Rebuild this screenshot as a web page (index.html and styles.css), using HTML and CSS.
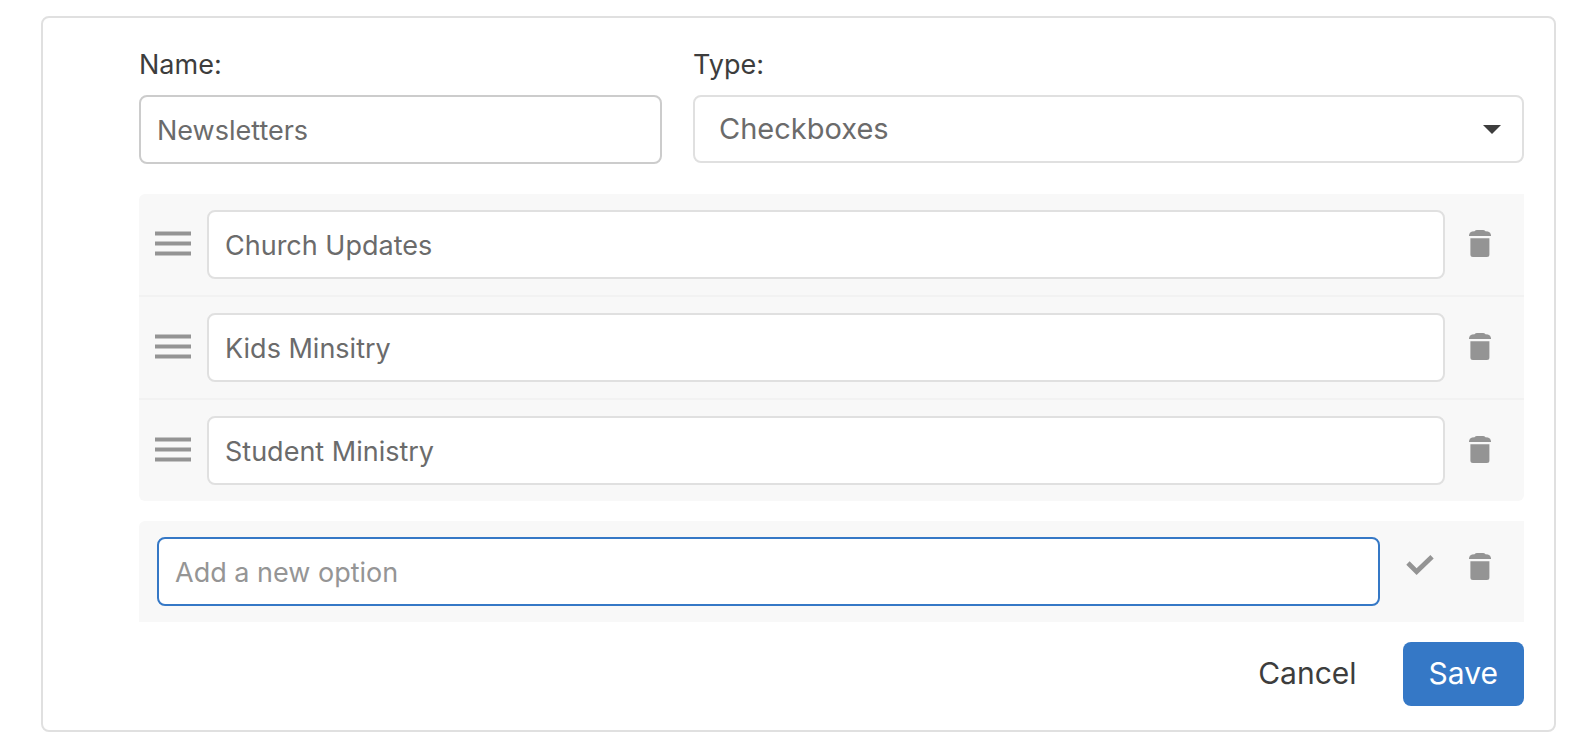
FILE: index.html
```html
<!DOCTYPE html>
<html lang="en">
<head>
<meta charset="utf-8">
<meta name="viewport" content="width=device-width, initial-scale=1">
<title>Edit field</title>
<link rel="stylesheet" href="styles.css">
</head>
<body>
<svg class="sprite" aria-hidden="true">
  <symbol id="grip" viewBox="0 0 36 25"><path d="M0 .5h36v4H0zM0 10.500h36v4H0zM0 20.500h36v4H0z"/></symbol>
  <symbol id="trash" viewBox="0 0 22 27"><path d="M0 6V5Q.3 2.300 3 1.500L5.500 1.200Q6.500 0 8 0h6q1.500 0 2.500 1.200L19 1.500q2.700.8 3 3.500V6zM1.400 8.300h19v16.200q0 2.500-2.500 2.500h-14q-2.500 0-2.500-2.500z"/></symbol>
  <symbol id="check" viewBox="0 0 28 20"><path d="M.3 9.700 3.600 6.300l7 7L24.400 0l3.300 3.400L10.600 20z"/></symbol>
</svg>
<form class="card">
  <div class="fields">
    <div class="field field-name">
      <label class="label" for="name">Name:</label>
      <input class="input input-strong" id="name" type="text" value="Newsletters">
    </div>
    <div class="field">
      <label class="label" for="type">Type:</label>
      <div class="select-wrap">
        <select class="select" id="type"><option>Checkboxes</option></select>
        <svg class="caret" viewBox="0 0 18 9" aria-hidden="true"><path d="M0 0h18L9 9z"/></svg>
      </div>
    </div>
  </div>
  <ul class="options">
    <li class="option">
      <button class="icon-button grip" type="button" aria-label="Reorder"><svg class="icon-grip"><use href="#grip"/></svg></button>
      <input class="input" type="text" aria-label="Option 1" value="Church Updates">
      <button class="icon-button remove" type="button" aria-label="Delete"><svg class="icon-trash"><use href="#trash"/></svg></button>
    </li>
    <li class="option">
      <button class="icon-button grip" type="button" aria-label="Reorder"><svg class="icon-grip"><use href="#grip"/></svg></button>
      <input class="input" type="text" aria-label="Option 2" value="Kids Minsitry">
      <button class="icon-button remove" type="button" aria-label="Delete"><svg class="icon-trash"><use href="#trash"/></svg></button>
    </li>
    <li class="option">
      <button class="icon-button grip" type="button" aria-label="Reorder"><svg class="icon-grip"><use href="#grip"/></svg></button>
      <input class="input" type="text" aria-label="Option 3" value="Student Ministry">
      <button class="icon-button remove" type="button" aria-label="Delete"><svg class="icon-trash"><use href="#trash"/></svg></button>
    </li>
  </ul>
  <div class="new-option">
    <input class="input input-active" type="text" aria-label="New option" placeholder="Add a new option">
    <button class="icon-button confirm" type="button" aria-label="Add"><svg class="icon-check"><use href="#check"/></svg></button>
    <button class="icon-button remove" type="button" aria-label="Delete"><svg class="icon-trash"><use href="#trash"/></svg></button>
  </div>
  <div class="actions">
    <button class="button" type="button">Cancel</button>
    <button class="button button-primary" type="submit">Save</button>
  </div>
</form>
</body>
</html>
```
FILE: styles.css
```css
* {
  box-sizing: border-box;
}

body {
  margin: 0;
  padding: 16px 40px 16px 41px;
  background: #fff;
  color: #3d3d3d;
  font-family: Inter, "Liberation Sans", sans-serif;
  font-size: 27px;
}

input,
select,
button {
  margin: 0;
  font: inherit;
}

.sprite {
  display: none;
}

.card {
  padding: 29px 30px 24px 96px;
  border: 2px solid #e0e0e0;
  border-radius: 8px;
}

.fields {
  display: grid;
  grid-template-columns: 2fr 3fr;
  margin-bottom: 30px;
}

.field-name {
  padding-right: 31px;
}

.label {
  display: block;
  margin-bottom: 12px;
  line-height: 36px;
}

.input {
  display: block;
  flex: 1;
  width: 100%;
  min-width: 0;
  height: 69px;
  padding: 2px 16px 0;
  border: 2px solid #e0e0e0;
  border-radius: 8px;
  outline: 0;
  background: #fff;
  color: #6b6b6b;
}

.input::placeholder {
  color: #959595;
  opacity: 1;
}

.input-strong {
  border-color: #cccccc;
}

.input-active {
  border-color: #3578c6;
}

.select-wrap {
  position: relative;
}

.select {
  display: block;
  width: 100%;
  height: 68px;
  padding: 0 56px 2px 24px;
  border: 2px solid #e0e0e0;
  border-radius: 8px;
  appearance: none;
  background: #fff;
  color: #6b6b6b;
  font-size: 29px;
}

.caret {
  position: absolute;
  top: 30px;
  right: 23px;
  width: 18px;
  height: 9px;
  fill: #3d3d3d;
  pointer-events: none;
}

.options {
  margin: 0 0 20px;
  padding: 0;
  border-radius: 6px 0 6px 6px;
  background: #f8f8f8;
  list-style: none;
}

.option {
  display: flex;
  align-items: center;
  padding: 16px 0;
}

.option + .option {
  border-top: 2px solid #f2f2f2;
}

.new-option {
  display: flex;
  align-items: flex-start;
  padding: 16px 0 16px 18px;
  border-radius: 6px 0 0 0;
  background: #f8f8f8;
}

.icon-button {
  flex: none;
  padding: 16px 0 18px;
  border: 0;
  background: none;
}

.icon-button svg {
  display: block;
  fill: #949494;
}

.grip {
  padding-right: 16px;
  padding-left: 16px;
}

.remove {
  padding-right: 33px;
  padding-left: 24px;
}

.confirm {
  padding: 18px 11px 18px 26px;
}

.icon-grip {
  width: 36px;
  height: 25px;
}

.icon-trash {
  width: 22px;
  height: 27px;
}

.icon-check {
  width: 28px;
  height: 20px;
}

.actions {
  display: flex;
  justify-content: flex-end;
  gap: 20px;
  margin-top: 20px;
}

.button {
  height: 64px;
  padding: 0 26px 2px;
  border: 0;
  border-radius: 8px;
  background: none;
  color: #3d3d3d;
  font-size: 30px;
}

.button-primary {
  background: #3578c6;
  color: #fff;
}
```
